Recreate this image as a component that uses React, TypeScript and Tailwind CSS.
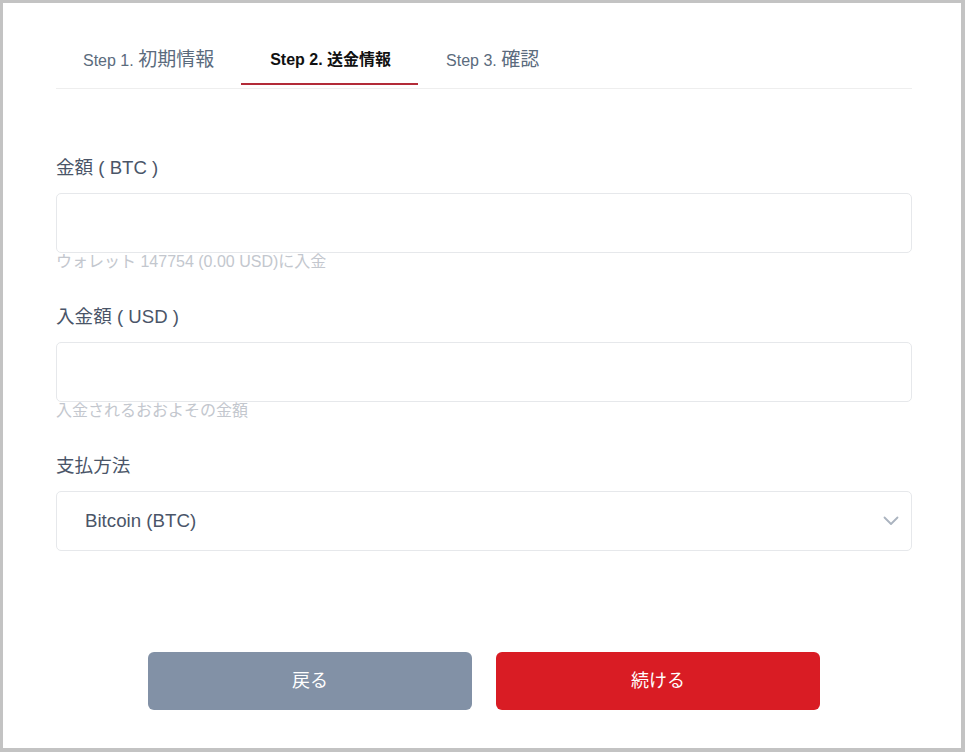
import React from "react";

const font = { fontFamily: '"Liberation Sans", "Noto Sans CJK JP", sans-serif' };

function Field({ label, helper, children }: { label: string; helper?: string; children: React.ReactNode }) {
  return (
    <div className="flex flex-col">
      <div className="text-[18.6px] leading-[27px] text-[#4a5568] mb-[12px]">{label}</div>
      {children}
      {helper ? <div className="text-[16px] leading-[18px] text-[#c3c7ce]">{helper}</div> : null}
    </div>
  );
}

export default function App() {
  return (
    <div
      className="w-[965px] h-[752px] bg-white border-t-[3px] border-l-[3px] border-r-[4px] border-b-[4px] border-[#c3c3c3] overflow-hidden"
      style={font}
    >
      <div className="ml-[53px] w-[856px] pt-[45px] flex flex-col">
        <div className="flex border-b border-[#eeeeee] pb-[3px]">
          <div className="pl-[27px] pr-[27px] pb-[10px] border-b-2 border-transparent text-[16px] leading-[24px] text-[#5b6b7d]">
            Step 1. <span className="text-[19px]">初期情報</span>
          </div>
          <div className="pl-[29px] pr-[27px] pb-[10px] border-b-2 border-[#b32b38] text-[16px] leading-[24px] font-bold text-[#111111]">
            Step 2. 送金情報
          </div>
          <div className="pl-[28px] pr-[27px] pb-[10px] border-b-2 border-transparent text-[16px] leading-[24px] text-[#5b6b7d]">
            Step 3. <span className="text-[19px]">確認</span>
          </div>
        </div>

        <div className="mt-[65px] flex flex-col gap-[32px]">
          <Field label="金額 ( BTC )" helper="ウォレット 147754 (0.00 USD)に入金">
            <input className="h-[60px] w-full rounded-[5px] border border-[#e6e8eb] outline-none px-[28px] text-[18px]" />
          </Field>
          <Field label="入金額 ( USD )" helper="入金されるおおよその金額">
            <input className="h-[60px] w-full rounded-[5px] border border-[#e6e8eb] outline-none px-[28px] text-[18px]" />
          </Field>
          <Field label="支払方法">
            <div className="h-[60px] w-full rounded-[5px] border border-[#e6e8eb] pl-[28px] pr-[12px] flex items-center justify-between">
              <span className="text-[18.7px] text-[#4a5568]">Bitcoin (BTC)</span>
              <svg width="16" height="10" viewBox="0 0 16 10" fill="none">
                <path d="M1.5 1.5 L8 8 L14.5 1.5" stroke="#aab3bf" strokeWidth="1.8" strokeLinecap="round" strokeLinejoin="round" />
              </svg>
            </div>
          </Field>
        </div>

        <div className="mt-[101px] flex justify-center gap-[24px]">
          <button className="w-[324px] h-[58px] rounded-[6px] bg-[#8291a6] text-white text-[18px]">戻る</button>
          <button className="w-[324px] h-[58px] rounded-[6px] bg-[#d91c24] text-white text-[18px]">続ける</button>
        </div>
      </div>
    </div>
  );
}
